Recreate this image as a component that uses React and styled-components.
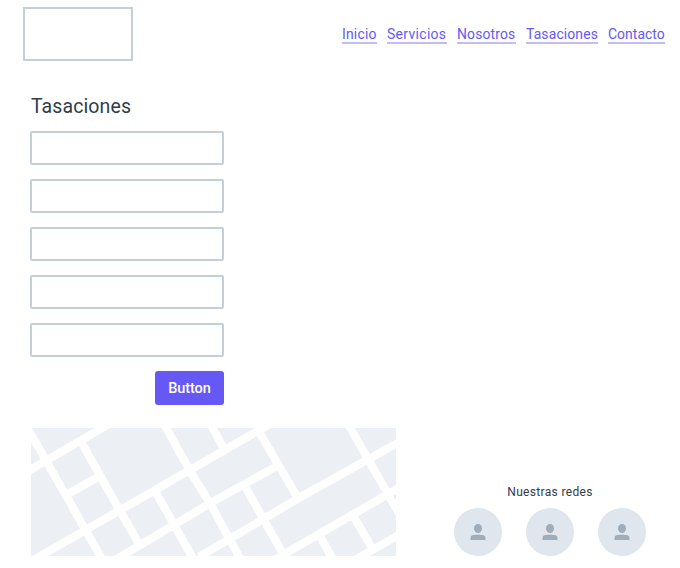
import React from "react";
import styled, { createGlobalStyle } from "styled-components";

const GlobalStyle = createGlobalStyle`
  * { box-sizing: border-box; }
  body {
    margin: 0;
    background: #fff;
    color: #2f3d4b;
    font-family: Roboto, "Liberation Sans", sans-serif;
  }
`;

const Page = styled.div`
  display: flex;
  flex-direction: column;
  width: 680px;
  height: 568px;
  overflow: hidden;
`;

const Header = styled.header`
  display: flex;
  justify-content: space-between;
  height: 61px;
  padding: 7px 15px 0 23px;
`;

const Logo = styled.div`
  width: 110px;
  height: 54px;
  border: 2px solid #c3cfd9;
`;

const Nav = styled.nav`
  display: flex;
  gap: 10px;
  padding-top: 17px;
`;

const NavLink = styled.a`
  width: ${(p) => p.$width}px;
  height: 20px;
  border-bottom: 2px solid #c3bcfb;
  color: #6558f5;
  font-size: 15px;
  line-height: 20px;
  letter-spacing: ${(p) => p.$spacing}px;
  white-space: nowrap;
  text-decoration: none;
`;

const NavLabel = styled.span`
  display: inline-block;
  transform: scaleX(0.93);
  transform-origin: left center;
`;

const Valuation = styled.form`
  display: flex;
  flex-direction: column;
  width: 194px;
  margin: 32px 0 0 30px;
`;

const Title = styled.h1`
  height: 38px;
  margin: 0;
  padding-left: 1px;
  font-size: 21px;
  font-weight: 400;
  line-height: 26px;
  letter-spacing: 0.1px;
  transform: scaleX(0.93);
  transform-origin: left center;
`;

const Fields = styled.div`
  display: grid;
  gap: 14px;
`;

const Field = styled.input`
  width: 100%;
  height: 34px;
  padding: 0 8px;
  border: 2px solid #c3cfd9;
  border-radius: 2px;
  background: #fff;
  outline: none;
`;

const Submit = styled.button`
  align-self: flex-end;
  width: 69px;
  height: 34px;
  margin-top: 14px;
  padding: 1px 0 0;
  border: 0;
  border-radius: 3px;
  background: #6558f5;
  color: #fff;
  font-family: inherit;
  font-size: 14.5px;
  font-weight: 500;
  line-height: 33px;
  letter-spacing: -0.1px;
`;

const Footer = styled.footer`
  display: flex;
  justify-content: space-between;
  align-items: flex-end;
  width: 615px;
  margin: 23px 0 0 31px;
`;

const Map = styled.svg`
  display: block;
  width: 365px;
  height: 128px;
  background: #ecf0f5;
`;

const Social = styled.section`
  width: 192px;
`;

const SocialTitle = styled.h2`
  margin: 0 0 8px;
  font-size: 12px;
  font-weight: 400;
  line-height: 16px;
  letter-spacing: 0.33px;
  text-align: center;
`;

const SocialList = styled.div`
  display: flex;
  gap: 24px;
`;

const Avatar = styled.a`
  display: block;
  width: 48px;
  height: 48px;
  border-radius: 50%;
  background: #dfe6ee;
`;

const PersonIcon = styled.svg`
  display: block;
  width: 48px;
  height: 48px;
  fill: #9dadb9;
`;

const links = [
  { label: "Inicio", width: 35, spacing: 0.2 },
  { label: "Servicios", width: 60, spacing: 0.34 },
  { label: "Nosotros", width: 59, spacing: 0.14 },
  { label: "Tasaciones", width: 72, spacing: 0.12 },
  { label: "Contacto", width: 57, spacing: 0.02 },
];

const roads = [
  "M-6 44.8L78 -4",
  "M-1 134L240 -4.6",
  "M84 132L179 75.3L245 38.7",
  "M168 129L267 70.5L372 12",
  "M243 132L372 57.5",
  "M324 132L372 104.5",
  "M-8 -7L14.5 31.5L71.5 132",
  "M51.3 16L89 82.7L107.5 115",
  "M38 65.5L67 49",
  "M133 -4L159 43L179 75.3L210 132",
  "M125.7 66L163 132",
  "M179.5 -4L192 19",
  "M228.3 4.3L267 70",
  "M215 60.3L251 124",
  "M317 -4L370 89",
  "M322.3 88L341 120",
  "M288 106L302 132",
];

export default function App() {
  return (
    <>
      <GlobalStyle />
      <Page>
        <Header>
          <Logo />
          <Nav>
            {links.map((l) => (
              <NavLink key={l.label} $width={l.width} $spacing={l.spacing}>
                <NavLabel>{l.label}</NavLabel>
              </NavLink>
            ))}
          </Nav>
        </Header>
        <Valuation>
          <Title>Tasaciones</Title>
          <Fields>
            {[1, 2, 3, 4, 5].map((n) => (
              <Field key={n} type="text" />
            ))}
          </Fields>
          <Submit type="button">Button</Submit>
        </Valuation>
        <Footer>
          <Map viewBox="0 0 365 128">
            <path d={roads.join("")} fill="none" stroke="#fff" strokeWidth="8" />
          </Map>
          <Social>
            <SocialTitle>Nuestras redes</SocialTitle>
            <SocialList>
              {[1, 2, 3].map((n) => (
                <Avatar key={n}>
                  <PersonIcon viewBox="0 0 48 48">
                    <ellipse cx="24" cy="20.5" rx="4" ry="4.5" />
                    <path d="M16.6 32V29.6C16.6 27.5 18.5 26.8 24 26.8S31.4 27.5 31.4 29.6V32Z" />
                  </PersonIcon>
                </Avatar>
              ))}
            </SocialList>
          </Social>
        </Footer>
      </Page>
    </>
  );
}
